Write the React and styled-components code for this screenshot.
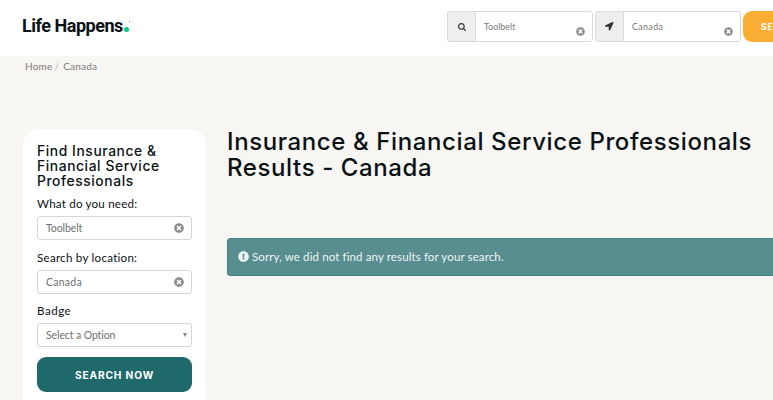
import React from "react";
import styled, { createGlobalStyle } from "styled-components";
import {
  FaExclamationCircle,
  FaLocationArrow,
  FaTimesCircle,
} from "react-icons/fa";

const SearchIcon = () => (
  <svg width="8" height="8" viewBox="0 128 1664 1664" fill="#333">
    <path d="M1152 832q0-185-131.5-316.5t-316.5-131.5-316.5 131.5-131.5 316.5 131.5 316.5 316.5 131.5 316.5-131.5 131.5-316.5zm512 832q0 52-38 90t-90 38q-54 0-90-38l-343-342q-179 124-399 124-143 0-273.5-55.5t-225-150-150-225-55.5-273.5 55.5-273.5 150-225 225-150 273.5-55.5 273.5 55.5 225 150 150 225 55.5 273.5q0 220-124 399l343 343q37 37 37 90z" />
  </svg>
);

const HeaderField = ({ icon, value, spacing }) => (
  <Group>
    <Addon>{icon}</Addon>
    <GroupValue $spacing={spacing}>{value}</GroupValue>
    <GroupClear size={9} />
  </Group>
);

const App = () => {
  return (
    <Page>
      <GlobalStyle />
      <Header>
        <Logo>
          <LogoText>Life Happens</LogoText>
          <LogoDot />
          <LogoMark />
        </Logo>
        <HeaderSearch>
          <HeaderField icon={<SearchIcon />} value="Toolbelt" spacing="0.05px" />
          <HeaderField
            icon={<FaLocationArrow size={8.5} />}
            value="Canada"
            spacing="0.4px"
          />
          <HeaderButton>SEARCH</HeaderButton>
        </HeaderSearch>
      </Header>

      <Breadcrumb>
        <span>Home</span>
        <Slash>/</Slash>
        <span>Canada</span>
      </Breadcrumb>

      <Content>
        <Sidebar>
          <SidebarTitle>
            Find Insurance &amp;
            <br />
            Financial Service
            <br />
            Professionals
          </SidebarTitle>
          <Label $spacing="0.2px">What do you need:</Label>
          <Field $spacing="-0.1px">
            <span>Toolbelt</span>
            <FaTimesCircle size={10} color="#8c8c8c" />
          </Field>
          <Label $spacing="0.25px">Search by location:</Label>
          <Field $spacing="0.25px">
            <span>Canada</span>
            <FaTimesCircle size={10} color="#8c8c8c" />
          </Field>
          <Label $spacing="0.5px">Badge</Label>
          <Field $select $spacing="-0.1px">
            <span>Select a Option</span>
            <Caret />
          </Field>
          <SearchButton>SEARCH NOW</SearchButton>
        </Sidebar>

        <Main>
          <Title>
            <TitleLine $spacing="0.61px">
              Insurance &amp; Financial Service Professionals
            </TitleLine>
            <TitleLine $spacing="0.6px">Results - Canada</TitleLine>
          </Title>
          <Divider />
          <Alert>
            <FaExclamationCircle size={11} />
            <span>Sorry, we did not find any results for your search.</span>
          </Alert>
        </Main>
      </Content>
    </Page>
  );
};

const GlobalStyle = createGlobalStyle`
  * {
    box-sizing: border-box;
  }
  body {
    margin: 0;
    background-color: #f8f6f2;
    overflow: hidden;
  }
`;

const Page = styled.div`
  width: 100%;
  height: 400px;
  overflow: hidden;
  background-color: #f8f6f2;
  color: #0b1215;
  font-family: Lato, "Liberation Sans", sans-serif;
`;

const Header = styled.header`
  display: flex;
  justify-content: space-between;
  height: 56px;
  padding: 11px 0 0 22px;
  background-color: white;
`;

const Logo = styled.div`
  display: flex;
  height: 30px;
`;

const LogoText = styled.span`
  font-family: Roboto, sans-serif;
  font-size: 18px;
  font-weight: 700;
  letter-spacing: -0.48px;
  line-height: 29px;
  white-space: nowrap;
`;

const LogoDot = styled.span`
  width: 5px;
  height: 5px;
  margin: 16px 0 0 1px;
  border-radius: 50%;
  background-color: #08c982;
`;

const LogoMark = styled.span`
  width: 1px;
  height: 1px;
  margin: 10px 0 0 0;
  background-color: #888;
`;

const HeaderSearch = styled.div`
  display: flex;
  flex: none;
  gap: 2px;
  width: 326px;
`;

const Group = styled.div`
  display: flex;
  flex: none;
  width: 146px;
  height: 31px;
  border: 1px solid #d9d9d9;
  border-radius: 3px;
  background-color: white;
`;

const Addon = styled.div`
  display: flex;
  justify-content: center;
  align-items: center;
  width: 28px;
  border-right: 1px solid #d9d9d9;
  border-radius: 2px 0 0 2px;
  background-color: #eee;
  color: #333;
`;

const GroupValue = styled.span`
  flex: 1;
  padding-left: 8px;
  color: #777;
  font-size: 8.8px;
  letter-spacing: ${(props) => props.$spacing};
  line-height: 30px;
`;

const GroupClear = styled(FaTimesCircle)`
  margin: 15px 7px 0 0;
  color: #8c8c8c;
`;

const HeaderButton = styled.button`
  flex: none;
  width: 76px;
  height: 31px;
  padding: 0 0 0 18px;
  border: none;
  border-radius: 9px;
  background-color: #fbae35;
  color: white;
  font-family: Inter, sans-serif;
  font-size: 8.5px;
  font-weight: 700;
  letter-spacing: 0.9px;
  text-align: left;
`;

const Breadcrumb = styled.nav`
  display: flex;
  height: 20px;
  padding-left: 25px;
  color: #7b7b79;
  font-size: 10px;
  letter-spacing: 0.2px;
  line-height: 20px;
`;

const Slash = styled.span`
  margin: 0 4px 0 2px;
  color: #bbb;
`;

const Content = styled.div`
  display: flex;
  padding: 52.5px 0 0 23px;
`;

const Sidebar = styled.aside`
  flex: none;
  width: 183px;
  height: 290px;
  padding: 15px 14px 0;
  border-radius: 16px;
  background-color: white;
`;

const SidebarTitle = styled.h4`
  margin: 0 0 4px;
  font-family: Inter, sans-serif;
  font-size: 13.8px;
  font-weight: 500;
  letter-spacing: 0.6px;
  line-height: 15.4px;
  white-space: nowrap;
`;

const Label = styled.label`
  display: block;
  height: 20px;
  margin-bottom: 2px;
  font-size: 11.6px;
  letter-spacing: ${(props) => props.$spacing};
  line-height: 19px;
`;

const Field = styled.div`
  display: flex;
  justify-content: space-between;
  align-items: center;
  height: 24px;
  margin-bottom: 7.8px;
  padding: 0 ${(props) => (props.$select ? "4px" : "7px")} 0 8px;
  border: 1px solid #d6d6d6;
  border-radius: 3px;
  color: #707070;
  font-size: 10.5px;
  letter-spacing: ${(props) => props.$spacing};
`;

const Caret = styled.span`
  border: 2.5px solid transparent;
  border-top: 4px solid #888;
  border-bottom: none;
`;

const SearchButton = styled.button`
  width: 155px;
  height: 35px;
  margin-top: 2px;
  border: none;
  border-radius: 9px;
  background-color: #20696b;
  color: white;
  font-family: Inter, sans-serif;
  font-size: 10.2px;
  font-weight: 700;
  letter-spacing: 0.85px;
`;

const Main = styled.main`
  flex: none;
  width: 560px;
  margin-left: 21px;
`;

const Title = styled.h1`
  margin: 0;
  font-family: Inter, sans-serif;
  font-size: 24px;
  font-weight: 500;
  line-height: 26.4px;
`;

const TitleLine = styled.span`
  display: block;
  letter-spacing: ${(props) => props.$spacing};
  white-space: nowrap;
`;

const Divider = styled.hr`
  height: 1px;
  margin: 13px 0 42.3px;
  border: none;
  background-color: #fcfbf9;
`;

const Alert = styled.div`
  display: flex;
  align-items: center;
  gap: 3px;
  height: 38.5px;
  padding-left: 10px;
  border: 1px solid #468384;
  border-radius: 3px;
  background-color: #588e8f;
  color: #eef4f3;
  font-size: 11.5px;
  letter-spacing: 0.12px;
`;

export default App;
